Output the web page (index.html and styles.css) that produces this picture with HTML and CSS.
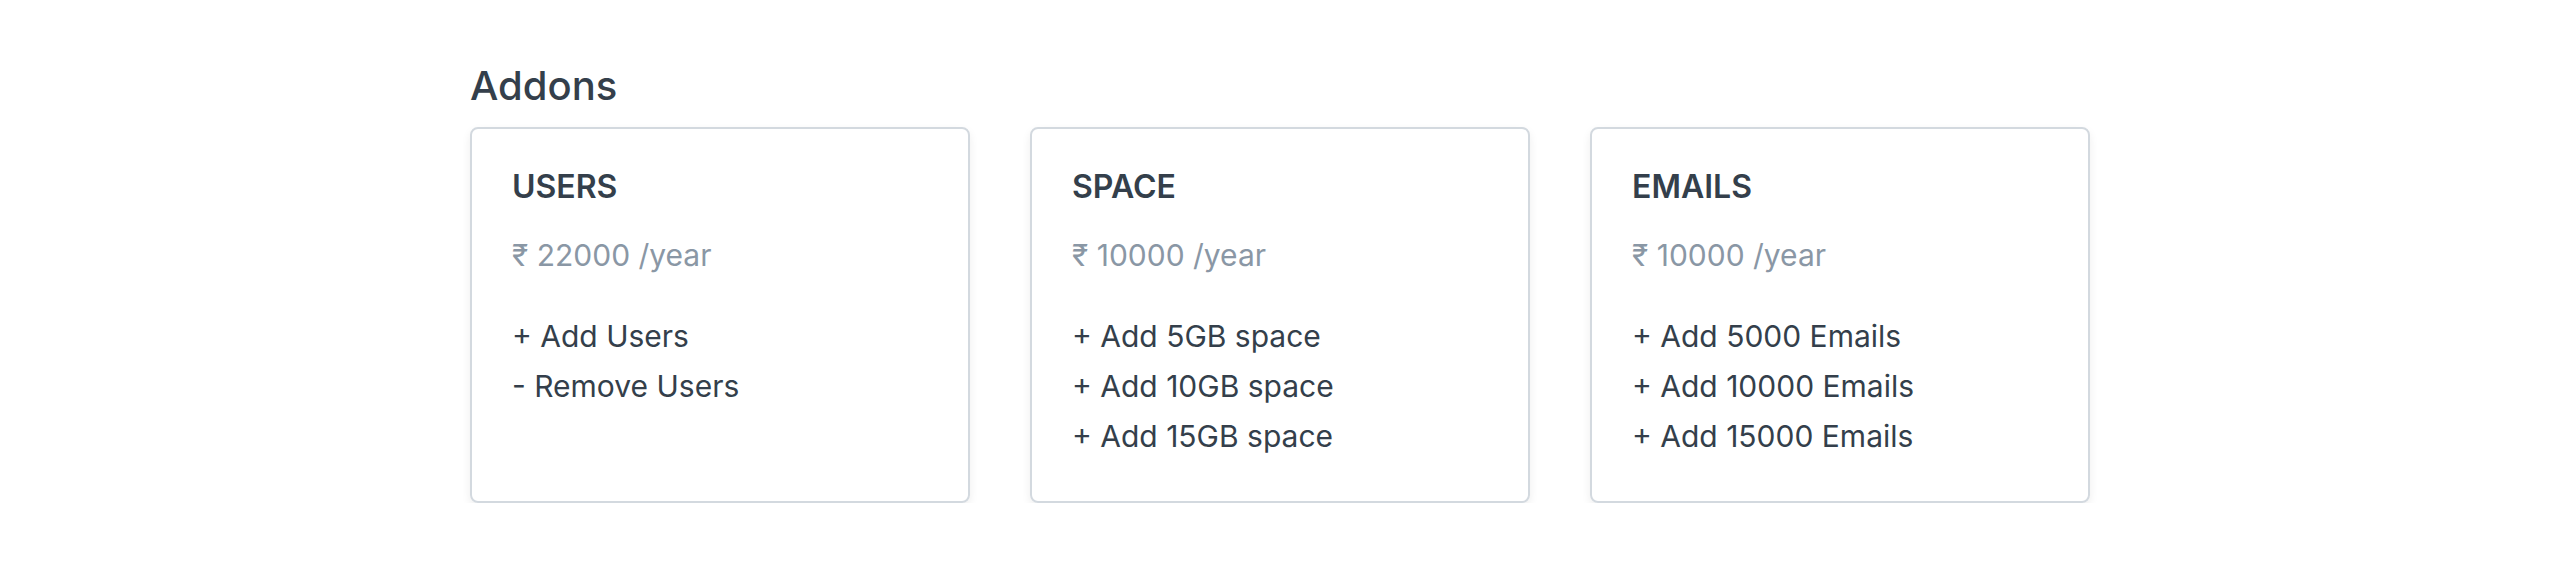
FILE: index.html
```html
<!DOCTYPE html>
<html lang="en">
<head>
    <meta charset="UTF-8">
    <meta name="viewport" content="width=device-width, initial-scale=1.0">
    <title>Addons</title>
    <link rel="stylesheet" href="styles.css">
</head>
<body>
    <div class="container">
        <h2 class="titulo">Addons</h2>

        <div class="addons">
            <!-- Usuarios -->
            <div class="addon-card">
                <h3 class="addon-nombre">USERS</h3>
                <p class="addon-precio">₹ 22000 /year</p>
                <ul class="addon-opciones">
                    <li>+ Add Users</li>
                    <li>- Remove Users</li>
                </ul>
            </div>

            <!-- Espacio -->
            <div class="addon-card">
                <h3 class="addon-nombre">SPACE</h3>
                <p class="addon-precio">₹ 10000 /year</p>
                <ul class="addon-opciones">
                    <li>+ Add 5GB space</li>
                    <li>+ Add 10GB space</li>
                    <li>+ Add 15GB space</li>
                </ul>
            </div>

            <!-- Correos -->
            <div class="addon-card">
                <h3 class="addon-nombre">EMAILS</h3>
                <p class="addon-precio">₹ 10000 /year</p>
                <ul class="addon-opciones">
                    <li>+ Add 5000 Emails</li>
                    <li>+ Add 10000 Emails</li>
                    <li>+ Add 15000 Emails</li>
                </ul>
            </div>
        </div>
    </div>
</body>
</html>
```

FILE: styles.css
```css
body {
    margin: 0;
    font-family: Inter, "Noto Sans", sans-serif;
    color: #343f4b;
    background: #fff;
}
.container {
    width: 1620px;
    margin: 0 auto;
    padding-top: 62px;
}
.titulo {
    margin: 0 0 17px;
    font-size: 40px;
    line-height: 48px;
    font-weight: 500;
}
.addons {
    display: grid;
    grid-template-columns: repeat(3, 1fr);
    gap: 60px;
}
.addon-card {
    border: 2px solid #d3d9df;
    border-radius: 8px;
    padding: 38px 40px 40px;
    box-shadow: 0 4px 10px rgba(0, 0, 0, 0.07);
}
.addon-nombre {
    margin: 0 0 30px;
    font-size: 32px;
    line-height: 40px;
    font-weight: 600;
}
.addon-precio {
    margin: 0 0 38px;
    font-size: 30px;
    line-height: 36px;
    color: #8a97a5;
}
.addon-opciones {
    list-style: none;
    margin: 0;
    padding: 0;
    font-size: 30px;
    line-height: 50px;
}
```
